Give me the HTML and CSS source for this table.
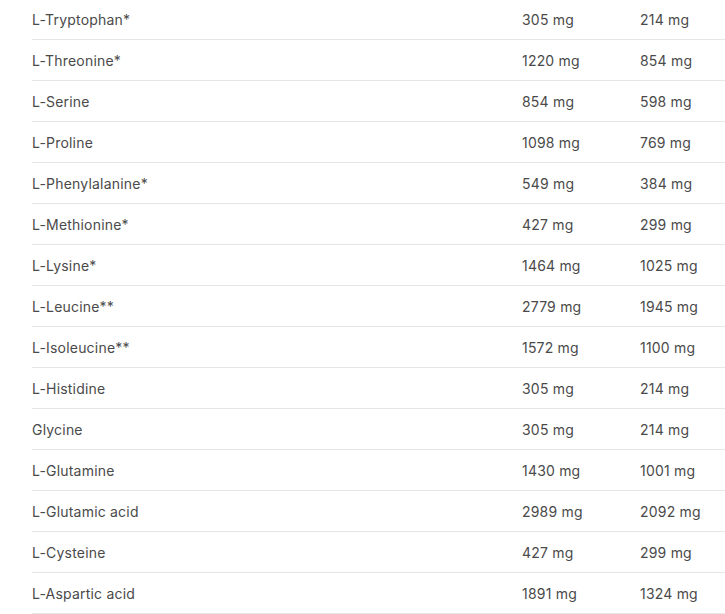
FILE: index.html
```html
<!DOCTYPE html>
<html>
<head>
<meta charset="utf-8">
<link rel="stylesheet" href="styles.css">
</head>
<body>
<div class="table">
  <div class="row"><span>L-Tryptophan*</span><span>305 mg</span><span>214 mg</span></div>
  <div class="row"><span>L-Threonine*</span><span>1220 mg</span><span>854 mg</span></div>
  <div class="row"><span>L-Serine</span><span>854 mg</span><span>598 mg</span></div>
  <div class="row"><span>L-Proline</span><span>1098 mg</span><span>769 mg</span></div>
  <div class="row"><span>L-Phenylalanine*</span><span>549 mg</span><span>384 mg</span></div>
  <div class="row"><span>L-Methionine*</span><span>427 mg</span><span>299 mg</span></div>
  <div class="row"><span>L-Lysine*</span><span>1464 mg</span><span>1025 mg</span></div>
  <div class="row"><span>L-Leucine**</span><span>2779 mg</span><span>1945 mg</span></div>
  <div class="row"><span>L-Isoleucine**</span><span>1572 mg</span><span>1100 mg</span></div>
  <div class="row"><span>L-Histidine</span><span>305 mg</span><span>214 mg</span></div>
  <div class="row"><span>Glycine</span><span>305 mg</span><span>214 mg</span></div>
  <div class="row"><span>L-Glutamine</span><span>1430 mg</span><span>1001 mg</span></div>
  <div class="row"><span>L-Glutamic acid</span><span>2989 mg</span><span>2092 mg</span></div>
  <div class="row"><span>L-Cysteine</span><span>427 mg</span><span>299 mg</span></div>
  <div class="row"><span>L-Aspartic acid</span><span>1891 mg</span><span>1324 mg</span></div>
</div>
</body>
</html>
```
FILE: styles.css
```css
html, body {
  margin: 0;
  padding: 0;
  background: #ffffff;
}
body {
  font-family: Inter, "Open Sans", sans-serif;
  font-size: 14px;
  font-weight: 400;
  letter-spacing: 0.2px;
  color: #4a4a4a;
  overflow: hidden;
}
.table {
  margin-top: -1px;
  padding-left: 32px;
}
.row {
  display: grid;
  grid-template-columns: 490px 118px 1fr;
  align-items: center;
  height: 40px;
  border-bottom: 1px solid #e6e6e6;
}
```
